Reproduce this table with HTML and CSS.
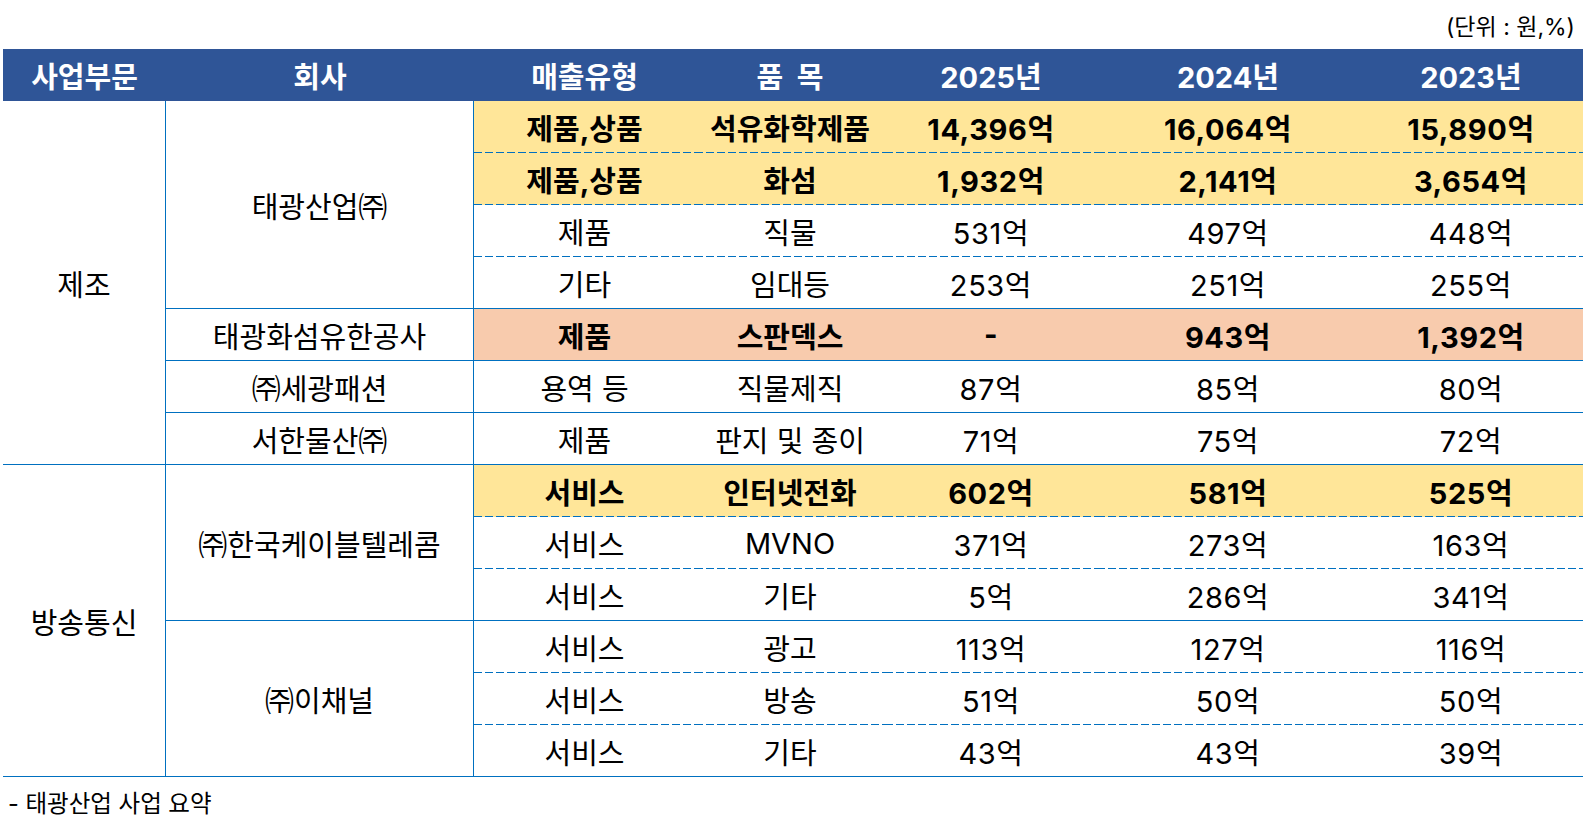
FILE: index.html
```html
<!DOCTYPE html>
<html lang="ko">
<head>
<meta charset="utf-8">
<title>태광산업 사업 요약</title>
<link rel="stylesheet" href="styles.css">
</head>
<body>
<div class="page">
  <div class="unit">(단위 : 원,%)</div>
  <table class="sales">
    <colgroup>
      <col class="c-seg"><col class="c-co"><col class="c-type"><col class="c-item"><col class="c-y25"><col class="c-y24"><col class="c-y23">
    </colgroup>
    <thead>
      <tr>
        <th>사업부문</th><th>회사</th><th>매출유형</th><th>품&nbsp;&nbsp;목</th><th>2025년</th><th>2024년</th><th>2023년</th>
      </tr>
    </thead>
    <tbody>
      <tr class="yellow dash">
        <td class="seg" rowspan="7">제조</td>
        <td class="co" rowspan="4">태광산업㈜</td>
        <td class="cell">제품,상품</td><td class="cell">석유화학제품</td><td class="cell">14,396억</td><td class="cell">16,064억</td><td class="cell">15,890억</td>
      </tr>
      <tr class="yellow dash">
        <td class="cell">제품,상품</td><td class="cell">화섬</td><td class="cell">1,932억</td><td class="cell">2,141억</td><td class="cell">3,654억</td>
      </tr>
      <tr class="dash">
        <td class="cell">제품</td><td class="cell">직물</td><td class="cell">531억</td><td class="cell">497억</td><td class="cell">448억</td>
      </tr>
      <tr class="solid">
        <td class="cell">기타</td><td class="cell">임대등</td><td class="cell">253억</td><td class="cell">251억</td><td class="cell">255억</td>
      </tr>
      <tr class="orange solid">
        <td class="co">태광화섬유한공사</td>
        <td class="cell">제품</td><td class="cell">스판덱스</td><td class="cell">-</td><td class="cell">943억</td><td class="cell">1,392억</td>
      </tr>
      <tr class="solid">
        <td class="co">㈜세광패션</td>
        <td class="cell">용역 등</td><td class="cell">직물제직</td><td class="cell">87억</td><td class="cell">85억</td><td class="cell">80억</td>
      </tr>
      <tr class="solid">
        <td class="co">서한물산㈜</td>
        <td class="cell">제품</td><td class="cell">판지 및 종이</td><td class="cell">71억</td><td class="cell">75억</td><td class="cell">72억</td>
      </tr>
      <tr class="yellow dash">
        <td class="seg" rowspan="6">방송통신</td>
        <td class="co" rowspan="3">㈜한국케이블텔레콤</td>
        <td class="cell">서비스</td><td class="cell">인터넷전화</td><td class="cell">602억</td><td class="cell">581억</td><td class="cell">525억</td>
      </tr>
      <tr class="dash">
        <td class="cell">서비스</td><td class="cell">MVNO</td><td class="cell">371억</td><td class="cell">273억</td><td class="cell">163억</td>
      </tr>
      <tr class="solid">
        <td class="cell">서비스</td><td class="cell">기타</td><td class="cell">5억</td><td class="cell">286억</td><td class="cell">341억</td>
      </tr>
      <tr class="dash">
        <td class="co" rowspan="3">㈜이채널</td>
        <td class="cell">서비스</td><td class="cell">광고</td><td class="cell">113억</td><td class="cell">127억</td><td class="cell">116억</td>
      </tr>
      <tr class="dash">
        <td class="cell">서비스</td><td class="cell">방송</td><td class="cell">51억</td><td class="cell">50억</td><td class="cell">50억</td>
      </tr>
      <tr class="solid">
        <td class="cell">서비스</td><td class="cell">기타</td><td class="cell">43억</td><td class="cell">43억</td><td class="cell">39억</td>
      </tr>
    </tbody>
  </table>
  <div class="note">- 태광산업 사업 요약</div>
</div>
</body>
</html>
```

FILE: styles.css
```css
html, body {
  margin: 0;
  padding: 0;
  background: #ffffff;
}

body {
  font-family: "Inter", "Noto Sans CJK KR", sans-serif;
  color: #000000;
}

.page {
  width: 1580px;
  margin-left: 3px;
}

.unit {
  height: 49px;
  display: flex;
  align-items: center;
  justify-content: flex-end;
  padding-right: 8px;
  font-size: 23px;
  color: #000000;
}

.sales {
  width: 1580px;
  table-layout: fixed;
  border-collapse: separate;
  border-spacing: 0;
  font-size: 29px;
}

.c-seg { width: 163px; }
.c-co { width: 308px; }
.c-type { width: 221px; }
.c-item { width: 190px; }
.c-y25 { width: 212px; }
.c-y24 { width: 262px; }
.c-y23 { width: 224px; }

.sales th {
  height: 52px;
  padding: 0;
  background: #2f5597;
  color: #ffffff;
  font-weight: 700;
  text-align: center;
  vertical-align: middle;
}

.sales tbody tr {
  height: 52px;
}

.sales td {
  padding: 0;
  text-align: center;
  vertical-align: middle;
  font-weight: 400;
  white-space: nowrap;
}

.sales td.cell:nth-last-child(-n+3) {
  letter-spacing: 0.6px;
}

.sales td.seg {
  border-right: 1px solid #0070c0;
  border-bottom: 1px solid #0070c0;
}

.sales td.co {
  border-right: 1px solid #0070c0;
  border-bottom: 1px solid #0070c0;
}

.sales tr.solid td.cell {
  border-bottom: 1px solid #0070c0;
}

.sales tr.dash td.cell {
  background-image: linear-gradient(to right, #0070c0 8px, transparent 8px);
  background-size: 11px 1px;
  background-repeat: repeat-x;
  background-position: left bottom;
}

.sales tr.yellow td.cell {
  background-color: #ffe699;
  font-weight: 700;
}

.sales tr.orange td.cell {
  background-color: #f8cbad;
  font-weight: 700;
}

.note {
  padding: 11px 0 0 5px;
  font-size: 23.5px;
  line-height: 1.4;
}
```
